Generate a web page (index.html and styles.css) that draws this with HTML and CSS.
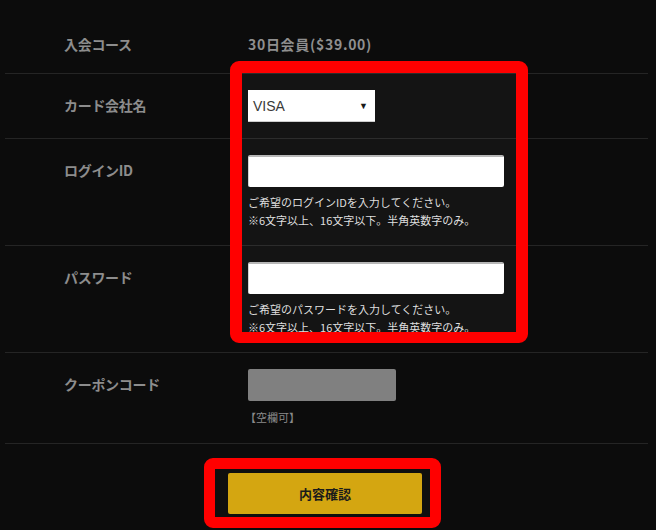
FILE: index.html
```html
<!DOCTYPE html>
<html lang="ja">
<head>
<meta charset="utf-8">
<title>入会フォーム</title>
<link rel="stylesheet" href="styles.css">
</head>
<body>
<div class="page">
  <div class="form">
    <div class="row row-first">
      <div class="label">入会コース</div>
      <div class="value-text">30日会員($39.00)</div>
    </div>
    <div class="row">
      <div class="label">カード会社名</div>
      <div class="field">
        <div class="select"><span>VISA</span><span class="arrow">▼</span></div>
      </div>
    </div>
    <div class="row row-help">
      <div class="label">ログインID</div>
      <div class="field">
        <div class="input input-wide"></div>
        <p class="help">ご希望のログインIDを入力してください。<br>※6文字以上、16文字以下。半角英数字のみ。</p>
      </div>
    </div>
    <div class="row row-help row-pass">
      <div class="label">パスワード</div>
      <div class="field">
        <div class="input input-wide"></div>
        <p class="help">ご希望のパスワードを入力してください。<br>※6文字以上、16文字以下。半角英数字のみ。</p>
      </div>
    </div>
    <div class="row row-coupon">
      <div class="label">クーポンコード</div>
      <div class="field">
        <div class="input input-coupon"></div>
        <p class="note">【空欄可】</p>
      </div>
    </div>
    <div class="actions">
      <div class="btn-frame">
        <div class="btn">内容確認</div>
      </div>
    </div>
  </div>
  <div class="highlight"></div>
</div>
</body>
</html>
```

FILE: styles.css
```css
html, body {
  margin: 0;
  padding: 0;
  background: #0c0c0c;
}
body {
  font-family: "Noto Sans CJK JP", "Noto Sans", sans-serif;
  width: 656px;
  height: 530px;
  overflow: hidden;
}
.page {
  position: relative;
  height: 530px;
}
.form {
  margin: 0 8px 0 5px;
}
.row {
  display: grid;
  grid-template-columns: 184px 1fr;
  padding: 16px 0 16px 59px;
  border-bottom: 1px solid #252525;
}
.row-first {
  padding-top: 34px;
  padding-bottom: 19px;
}
.row-coupon {
  padding-bottom: 17px;
}
.label {
  color: #8d8d8d;
  font-weight: bold;
  font-size: 14px;
  line-height: 20px;
  padding-top: 5px;
  letter-spacing: -0.3px;
}
.row-first .label {
  padding-top: 0;
}
.value-text {
  color: #8f8f8f;
  font-weight: bold;
  font-size: 14px;
  line-height: 20px;
  letter-spacing: 0.7px;
}
.field {
  display: flex;
  flex-direction: column;
  align-items: flex-start;
}
.select {
  width: 127px;
  height: 32px;
  box-sizing: border-box;
  background: #fff;
  display: flex;
  align-items: center;
  justify-content: space-between;
  padding: 0 7px 0 5px;
  font-family: "Liberation Sans", Arial, sans-serif;
  font-size: 14px;
  color: #333;
  border-bottom: 1px solid #ccc;
}
.arrow {
  font-size: 9px;
  color: #111;
}
.input {
  height: 32px;
  box-sizing: border-box;
  border-radius: 2px;
}
.input-wide {
  width: 256px;
  background: #fff;
  border-top: 2px solid #b5b5b5;
  border-left: 1px solid #d0d0d0;
}
.input-coupon {
  width: 148px;
  background: #808080;
}
.help {
  margin: 6px 0 0;
  color: #dedede;
  font-size: 11px;
  line-height: 18px;
}
.note {
  margin: 7px 0 0 -3px;
  color: #8a8a8a;
  font-size: 11px;
  line-height: 18px;
}
.actions {
  display: flex;
  padding: 14px 0 0 199px;
}
.btn-frame {
  border: 11px solid #ff0000;
  border-radius: 9px;
  padding: 4px 8px 3px 13px;
  background: #0f0f0f;
}
.btn {
  width: 194px;
  height: 41px;
  background: #d4a611;
  border-radius: 2px;
  display: flex;
  align-items: center;
  justify-content: center;
  color: #1b1b1b;
  font-weight: bold;
  font-size: 13px;
}
.highlight {
  position: absolute;
  left: 230px;
  top: 61px;
  width: 298px;
  height: 282px;
  box-sizing: border-box;
  border: 12px solid #ff0000;
  border-bottom-width: 11px;
  border-radius: 9px;
  background: rgba(255, 255, 255, 0.035);
  pointer-events: none;
}
```
